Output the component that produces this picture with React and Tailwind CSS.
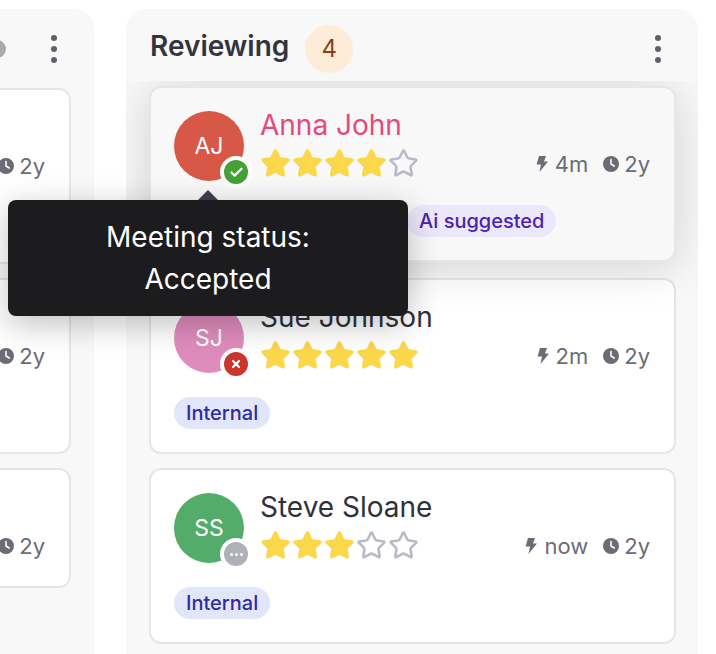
import React from 'react';
import { Star, Check, X } from 'lucide-react';

const font = { fontFamily: 'Inter, "Liberation Sans", sans-serif' };

function Bolt() {
  return (
    <svg viewBox="0 0 12 16" className="w-3 h-4 fill-[#6b6c75]">
      <path d="M3 0h7L8 5.5h4L3.5 16 5 8.5H0.6z" />
    </svg>
  );
}

function Clock() {
  return (
    <svg viewBox="0 0 16 16" className="w-4 h-4">
      <circle cx="8" cy="8" r="8" fill="#6b6c75" />
      <path d="M8 3.5V8l3.2 2" fill="none" stroke="#fff" strokeWidth="1.6" strokeLinecap="round" strokeLinejoin="round" />
    </svg>
  );
}

function Stars({ count }) {
  return (
    <div className="flex gap-[1px] h-7 items-center">
      {[0, 1, 2, 3, 4].map((i) => (
        <Star
          key={i}
          size={31}
          strokeWidth={2}
          className={i < count ? 'fill-[#fad84a] text-[#fad84a]' : 'text-[#b9bac3]'}
        />
      ))}
    </div>
  );
}

function Meta({ fresh, age }) {
  return (
    <div className="flex items-center pt-px text-[22px] leading-7 text-[#6b6c75]">
      {fresh && (
        <div className="flex items-center gap-[7px] mr-[15px]">
          <Bolt />
          <span>{fresh}</span>
        </div>
      )}
      <div className="flex items-center gap-[5px]">
        <Clock />
        <span>{age}</span>
      </div>
    </div>
  );
}

function StatusBadge({ status }) {
  const colors = { ok: 'bg-[#44a136]', no: 'bg-[#c9362c]', wait: 'bg-[#afb0b8]' };
  return (
    <div className="absolute -right-2 -bottom-[7px] w-8 h-8 rounded-full bg-white flex items-center justify-center">
      <div className={`w-6 h-6 rounded-full flex items-center justify-center ${colors[status]}`}>
        {status === 'ok' && <Check size={15} strokeWidth={3.5} className="text-white" />}
        {status === 'no' && <X size={12} strokeWidth={4.5} className="text-white" />}
        {status === 'wait' && (
          <div className="flex gap-[2px]">
            <span className="w-[3px] h-[3px] rounded-full bg-white" />
            <span className="w-[3px] h-[3px] rounded-full bg-white" />
            <span className="w-[3px] h-[3px] rounded-full bg-white" />
          </div>
        )}
      </div>
    </div>
  );
}

function Tag({ kind, children, className = '' }) {
  const look = kind === 'ai' ? 'bg-[#ece8fb] text-[#4d22ab]' : 'bg-[#e2e6fb] text-[#2f2ba0]';
  return (
    <span className={`h-8 px-3 rounded-full flex items-center text-xl font-medium ${look} ${className}`}>
      {children}
    </span>
  );
}

function Card({ item }) {
  const { initials, color, name, nameColor, rating, status, fresh, age, hovered, tags, noTags } = item;
  return (
    <div
      className={`border-2 border-[#e6e6e6] rounded-xl pl-[23px] pr-6 pt-[23px] ${noTags ? 'h-[120px]' : 'h-[176px]'} ${
        hovered ? 'bg-[#f8f8f8] -translate-y-[2px] shadow-[0_4px_48px_rgba(0,0,0,0.16)]' : 'bg-white'
      }`}
    >
      <div className="flex">
        <div className={`relative w-[70px] h-[70px] rounded-full flex items-center justify-center shrink-0 text-white text-[23px] ${color}`}>
          {initials}
          {status && <StatusBadge status={status} />}
        </div>
        <div className="flex-1 ml-4">
          <div className={`h-7 leading-7 text-[28px] whitespace-nowrap ${nameColor || 'text-[#30313a]'}`}>{name}</div>
          <div className="flex items-center justify-between mt-[10px]">
            <Stars count={rating} />
            <Meta fresh={fresh} age={age} />
          </div>
        </div>
      </div>
      {tags && <div className="flex mt-6">{tags}</div>}
    </div>
  );
}

function Dots() {
  return (
    <div className="flex flex-col gap-[5px]">
      <span className="w-[6px] h-[6px] rounded-full bg-[#5f6068]" />
      <span className="w-[6px] h-[6px] rounded-full bg-[#5f6068]" />
      <span className="w-[6px] h-[6px] rounded-full bg-[#5f6068]" />
    </div>
  );
}

const leftCards = [
  { age: '2y', initials: '', color: '', name: '', rating: 0 },
  { age: '2y', initials: '', color: '', name: '', rating: 0 },
  { age: '2y', initials: '', color: '', name: '', rating: 0, noTags: true },
];

const rightCards = [
  {
    initials: 'AJ', color: 'bg-[#d75847]', name: 'Anna John', nameColor: 'text-[#e4487f]', rating: 4, status: 'ok',
    fresh: '4m', age: '2y', hovered: true,
    tags: <Tag kind="ai" className="ml-[233px]">Ai suggested</Tag>,
  },
  {
    initials: 'SJ', color: 'bg-[#df8cbd]', name: 'Sue Johnson', rating: 5, status: 'no', fresh: '2m', age: '2y',
    tags: <Tag>Internal</Tag>,
  },
  {
    initials: 'SS', color: 'bg-[#54ac6a]', name: 'Steve Sloane', rating: 3, status: 'wait', fresh: 'now', age: '2y',
    tags: <Tag>Internal</Tag>,
  },
];

export default function App() {
  return (
    <div className="relative w-[716px] h-[654px] overflow-hidden bg-white" style={font}>
      <div className="flex gap-8 ml-[-478px] pt-[9px] w-[1176px]">
        {/* Left board column, mostly off screen */}
        <div className="w-[572px] h-[700px] shrink-0 bg-[#f8f8f8] rounded-[20px]">
          <div className="h-[72px] pt-2 flex items-center justify-end pr-[37px]">
            <div className="w-[18px] h-[18px] rounded-full bg-[#a9a9ae] mr-[45px]" />
            <Dots />
          </div>
          <div className="overflow-hidden px-[23px] pt-[7px] h-[628px] flex flex-col gap-[14px]">
            {leftCards.map((c, i) => <Card key={i} item={c} />)}
          </div>
        </div>

        {/* Reviewing column */}
        <div className="w-[572px] h-[700px] shrink-0 bg-[#f8f8f8] rounded-[20px]">
          <div className="h-[72px] pt-2 flex items-center pl-6 pr-[37px]">
            <h2 className="text-[28px] font-semibold text-[#33343c] -mt-[6px]">Reviewing</h2>
            <div className="w-12 h-12 ml-4 rounded-full bg-[#fdedd8] text-[#8a3d1c] text-2xl flex items-center justify-center">4</div>
            <div className="ml-auto"><Dots /></div>
          </div>
          <div className="overflow-hidden px-[23px] pr-[22px] pt-[7px] h-[628px] flex flex-col gap-[14px]">
            {rightCards.map((c, i) => <Card key={i} item={c} />)}
          </div>
        </div>
      </div>

      {/* Tooltip */}
      <div className="absolute left-2 top-[200px] w-[400px] h-[116px] rounded-lg bg-[#1c1c1e] flex flex-col items-center justify-center text-white text-[28px] leading-[42px] shadow-[0_8px_32px_rgba(0,0,0,0.25)]">
        <div className="absolute -top-[10px] left-1/2 -ml-[10px] w-0 h-0 border-x-[10px] border-x-transparent border-b-[10px] border-b-[#3a3d48]" />
        <span>Meeting status:</span>
        <span>Accepted</span>
      </div>
    </div>
  );
}
